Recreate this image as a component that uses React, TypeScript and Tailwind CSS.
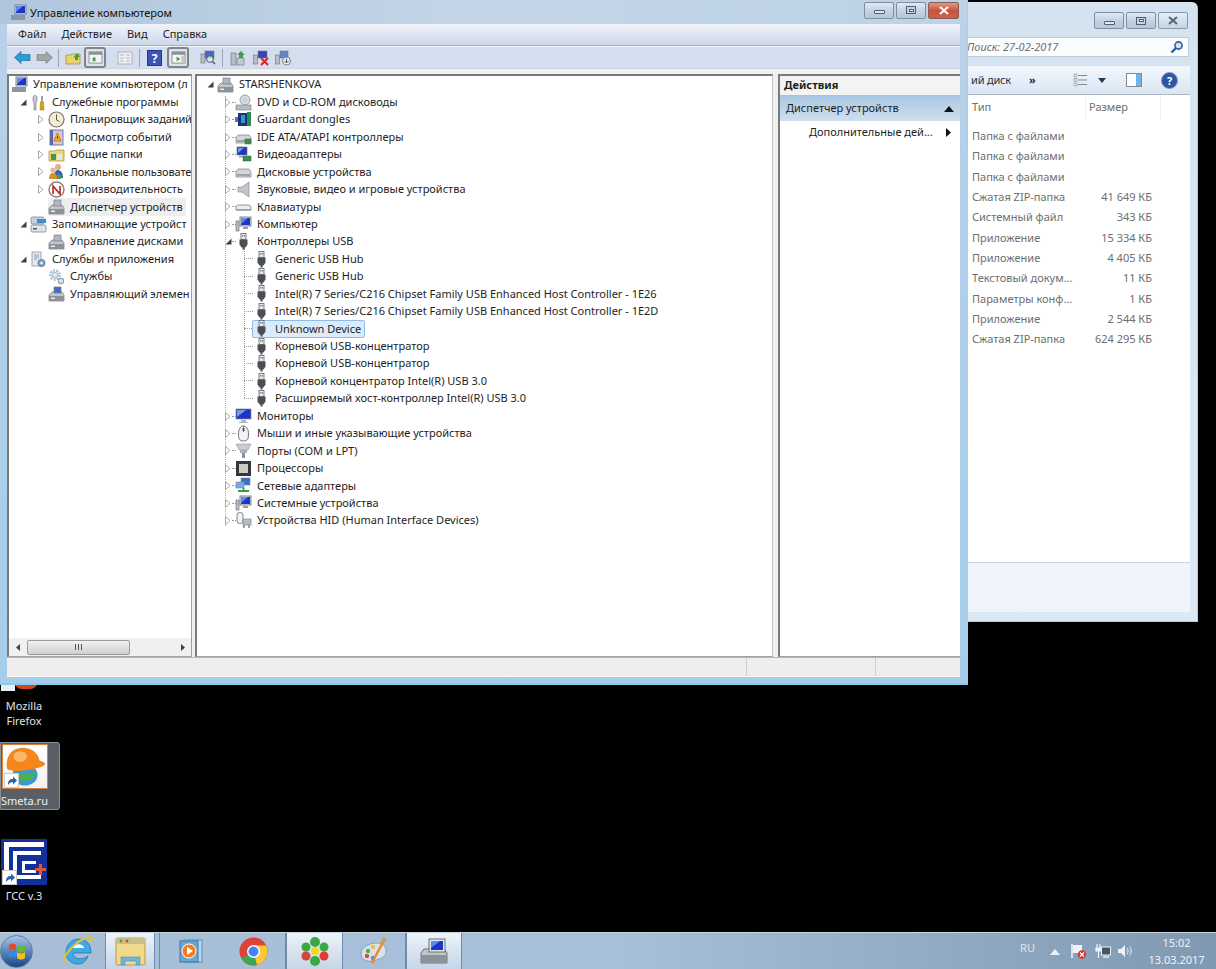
import React from "react";

const font = { fontFamily: '"Noto Sans", sans-serif' };

type IconName =
  | "computer" | "tools" | "clock" | "events" | "folder" | "users" | "perf" | "devmgr" | "storage" | "disk"
  | "services" | "gears" | "wmi" | "dvd" | "guardant" | "ide" | "video" | "hdd" | "sound" | "keyboard"
  | "pc" | "usb" | "monitor" | "mouse" | "port" | "cpu" | "net" | "sys" | "hid";

function Icon({ name }: { name: IconName }) {
  const c = "w-[17px] h-[17px] shrink-0";
  switch (name) {
    case "computer":
    case "pc":
    case "sys":
      return (
        <svg viewBox="0 0 17 17" className={c}>
          <rect x="5" y="1" width="11" height="9" fill="#dfe6ee" stroke="#667" strokeWidth="0.8" />
          <rect x="6" y="2" width="9" height="7" fill="#1c35c4" />
          <path d="M6 2h7L6 8z" fill="#5f8be8" />
          <path d="M8 11h5v2H8z" fill="#99a" />
          {name === "computer" && <rect x="1" y="11" width="14" height="5" fill="#8a96a3" />}
          {name !== "computer" && <rect x="1" y="5" width="3" height="10" fill="#b9c0c6" stroke="#667" strokeWidth="0.6" />}
        </svg>
      );
    case "tools":
      return (
        <svg viewBox="0 0 17 17" className={c}>
          <path d="M5 1l2 2v4l-1 1v8H4V8L3 7V3z" fill="#c5ccd4" stroke="#667" strokeWidth="0.6" />
          <path d="M11 2l2 0v6h-2z" fill="#9aa3ac" />
          <path d="M10.5 8h3l.5 8h-4z" fill="#e2a417" stroke="#8c6a10" strokeWidth="0.5" />
        </svg>
      );
    case "clock":
      return (
        <svg viewBox="0 0 17 17" className={c}>
          <circle cx="8.5" cy="8.5" r="7.5" fill="#f4ecd4" stroke="#7a7a70" strokeWidth="1.2" />
          <path d="M8.5 3.5v5.5l3 1.5" fill="none" stroke="#555" strokeWidth="1" />
        </svg>
      );
    case "events":
      return (
        <svg viewBox="0 0 17 17" className={c}>
          <rect x="2" y="1" width="13" height="15" fill="#d6c7d8" stroke="#5a5f80" strokeWidth="0.8" />
          <rect x="2" y="1" width="3" height="15" fill="#5a6aa8" />
          <path d="M9.5 4l3.5 8H6z" fill="#f0c020" stroke="#b8501c" strokeWidth="0.7" />
          <rect x="9" y="7" width="1" height="3" fill="#b02020" />
        </svg>
      );
    case "folder":
      return (
        <svg viewBox="0 0 17 17" className={c}>
          <path d="M1 5h6l1-1h8v11H1z" fill="#ecd679" stroke="#a98f38" strokeWidth="0.7" />
          <rect x="3" y="8" width="5" height="6" fill="#3d9a4a" />
          <rect x="9" y="8" width="5" height="6" fill="#dfe8ee" />
        </svg>
      );
    case "users":
      return (
        <svg viewBox="0 0 17 17" className={c}>
          <circle cx="10" cy="4" r="3" fill="#e0b080" />
          <path d="M6 15c0-6 2-8 4-8s5 2 5 8z" fill="#3460b8" />
          <circle cx="5" cy="7" r="2.6" fill="#e8b888" />
          <path d="M1 16c0-5 2-6 4-6s4 1 4 6z" fill="#d9902c" />
          <path d="M9 11l4 1v4H9z" fill="#4a9a50" />
        </svg>
      );
    case "perf":
      return (
        <svg viewBox="0 0 17 17" className={c}>
          <circle cx="8.5" cy="8.5" r="7.5" fill="#fff" stroke="#8b8078" strokeWidth="1.4" />
          <path d="M5 13V5l7 8V5" fill="none" stroke="#c22418" strokeWidth="1.6" />
        </svg>
      );
    case "devmgr":
    case "disk":
    case "wmi":
      return (
        <svg viewBox="0 0 17 17" className={c}>
          <path d="M1 10l3-3h10l2 3v6H1z" fill="#c2c6ca" stroke="#6d7278" strokeWidth="0.7" />
          <rect x="1" y="11" width="15" height="5" fill="#8d9298" />
          <rect x="6" y="2" width="7" height="6" fill={name === "wmi" ? "#4a6cc0" : "#aeb8c2"} stroke="#6d7278" strokeWidth="0.6" />
          <rect x="3" y="12.5" width="4" height="1.5" fill="#e8eaec" />
        </svg>
      );
    case "storage":
      return (
        <svg viewBox="0 0 17 17" className={c}>
          <rect x="1" y="1" width="13" height="7" rx="1.5" fill="#c6d2dc" stroke="#6c7884" strokeWidth="0.7" />
          <rect x="7" y="3" width="9" height="4" fill="#3b8dd0" />
          <rect x="1" y="9" width="15" height="7" rx="1.5" fill="#dfe4e8" stroke="#6c7884" strokeWidth="0.7" />
          <rect x="3" y="12" width="4" height="1.5" fill="#555" />
        </svg>
      );
    case "services":
      return (
        <svg viewBox="0 0 17 17" className={c}>
          <rect x="2" y="1" width="9" height="14" fill="#e4e9ee" stroke="#7c8894" strokeWidth="0.7" />
          <path d="M4 4h5M4 6h5M4 8h3" stroke="#7c8894" strokeWidth="0.8" />
          <circle cx="11.5" cy="12" r="3.6" fill="#7fa6cc" stroke="#4d7294" strokeWidth="0.8" />
          <circle cx="11.5" cy="12" r="1.2" fill="#fff" />
        </svg>
      );
    case "gears":
      return (
        <svg viewBox="0 0 17 17" className={c}>
          <circle cx="7" cy="7" r="4.6" fill="none" stroke="#a9bccd" strokeWidth="2.4" strokeDasharray="2 1.2" />
          <circle cx="7" cy="7" r="2.6" fill="#e7eef4" stroke="#8ca4b8" strokeWidth="0.8" />
          <circle cx="13" cy="13" r="2.6" fill="#dfe8ef" stroke="#8ca4b8" strokeWidth="1.2" />
        </svg>
      );
    case "dvd":
      return (
        <svg viewBox="0 0 17 17" className={c}>
          <circle cx="10" cy="6" r="5" fill="#d5dce2" stroke="#7a8894" strokeWidth="0.7" />
          <circle cx="10" cy="6" r="1.3" fill="#fff" stroke="#7a8894" strokeWidth="0.5" />
          <rect x="1" y="11" width="15" height="5" fill="#b8bcc0" stroke="#787c80" strokeWidth="0.6" />
        </svg>
      );
    case "guardant":
      return (
        <svg viewBox="0 0 17 17" className={c}>
          <rect x="0" y="6" width="4" height="5" fill="#6a7480" />
          <rect x="3" y="2" width="9" height="13" fill="#1c2f8e" />
          <rect x="6" y="4" width="4" height="8" fill="#28a0b0" />
          <rect x="12" y="1" width="4" height="14" fill="#2c8c50" />
        </svg>
      );
    case "ide":
    case "hdd":
      return (
        <svg viewBox="0 0 17 17" className={c}>
          <path d="M1 9l2-3h11l2 3v5H1z" fill="#d2d6da" stroke="#7c8084" strokeWidth="0.7" />
          <rect x="2" y="11" width="13" height="2" fill="#a0a4a8" />
          {name === "ide" && <rect x="10" y="10" width="6" height="5" fill="#3f8f52" stroke="#2a6a3a" strokeWidth="0.5" />}
        </svg>
      );
    case "video":
      return (
        <svg viewBox="0 0 17 17" className={c}>
          <rect x="2" y="1" width="10" height="8" fill="#1c35c4" stroke="#778" strokeWidth="0.7" />
          <path d="M3 2h6L3 7z" fill="#6f9ae8" />
          <rect x="8" y="10" width="8" height="5" fill="#3d8f4e" stroke="#2a6a3a" strokeWidth="0.5" />
          <rect x="4" y="10" width="4" height="1.5" fill="#99a" />
        </svg>
      );
    case "sound":
      return (
        <svg viewBox="0 0 17 17" className={c}>
          <path d="M14 1v15L7 11H3V6h4z" fill="#c2c6ca" stroke="#8a8e92" strokeWidth="0.7" />
        </svg>
      );
    case "keyboard":
      return (
        <svg viewBox="0 0 17 17" className={c}>
          <path d="M1 10c0-2 1-3 3-3h9c2 0 3 1 3 3v2H1z" fill="#eceef0" stroke="#777b80" strokeWidth="0.8" />
          <rect x="1" y="11" width="15" height="1.5" fill="#9a9ea2" />
        </svg>
      );
    case "usb":
      return (
        <svg viewBox="0 0 17 17" className={c}>
          <rect x="6" y="0.5" width="5" height="6" fill="#e8eaec" stroke="#60666c" strokeWidth="0.8" />
          <rect x="7.3" y="2" width="0.9" height="1.6" fill="#60666c" />
          <rect x="8.9" y="2" width="0.9" height="1.6" fill="#60666c" />
          <path d="M4.5 6.5h8v5l-2 3h-4l-2-3z" fill="#4a4f55" />
          <rect x="7.5" y="14" width="2" height="2.5" fill="#4a4f55" />
        </svg>
      );
    case "monitor":
      return (
        <svg viewBox="0 0 17 17" className={c}>
          <rect x="1" y="1" width="15" height="10" fill="#1c35c4" stroke="#889" strokeWidth="0.7" />
          <path d="M2 2h9L2 9z" fill="#6f9ae8" />
          <path d="M6 12h5v2h2v1H4v-1h2z" fill="#b0b6bc" />
        </svg>
      );
    case "mouse":
      return (
        <svg viewBox="0 0 17 17" className={c}>
          <path d="M8.5 1c3 0 5 3 5 8s-1 7-5 7-5-2-5-7 2-8 5-8z" fill="#f2f3f4" stroke="#5f6368" strokeWidth="0.9" />
          <path d="M8.5 1v6" stroke="#5f6368" strokeWidth="0.8" />
          <rect x="7.6" y="3" width="1.8" height="3" fill="#444" />
        </svg>
      );
    case "port":
      return (
        <svg viewBox="0 0 17 17" className={c}>
          <path d="M1 2h15l-3 6H4z" fill="#c6ccd2" stroke="#9098a0" strokeWidth="0.6" />
          <rect x="5" y="8" width="7" height="3" fill="#a8b0b8" />
          <rect x="7" y="11" width="3" height="5" fill="#8a929a" />
        </svg>
      );
    case "cpu":
      return (
        <svg viewBox="0 0 17 17" className={c}>
          <rect x="1" y="1" width="15" height="15" fill="#34383c" />
          <rect x="4" y="4" width="9" height="9" fill="#c8ccc4" />
        </svg>
      );
    case "net":
      return (
        <svg viewBox="0 0 17 17" className={c}>
          <rect x="6" y="1" width="9" height="7" fill="#3d6ecc" stroke="#789" strokeWidth="0.6" />
          <rect x="1" y="5" width="8" height="6" fill="#79a8e8" stroke="#789" strokeWidth="0.6" />
          <path d="M3 14h11M8.5 11v3" stroke="#30a048" strokeWidth="1.8" />
        </svg>
      );
    case "hid":
      return (
        <svg viewBox="0 0 17 17" className={c}>
          <rect x="2" y="0.5" width="6" height="11" rx="2.5" fill="#eef0f2" stroke="#666c72" strokeWidth="0.8" />
          <rect x="8" y="7" width="8" height="6" fill="#b6bcc2" stroke="#767c82" strokeWidth="0.6" />
          <path d="M9 13v3M14 13v3" stroke="#767c82" strokeWidth="1.4" />
        </svg>
      );
  }
}

function Caret({ kind }: { kind: "open" | "closed" | "none" }) {
  return (
    <span className="w-[8px] h-[17px] flex items-center justify-center shrink-0">
      {kind === "closed" && (
        <svg width="6" height="9" viewBox="0 0 6 9">
          <path d="M0.5 0.5L5 4.5L0.5 8.5z" fill="#fff" stroke="#a6a6a6" />
        </svg>
      )}
      {kind === "open" && (
        <svg width="7" height="7" viewBox="0 0 7 7">
          <path d="M6.5 0.5V6.5H0.5z" fill="#404040" />
        </svg>
      )}
    </span>
  );
}

type Row = { t: string; i: IconName; c: "open" | "closed" | "none"; lvl: number; sel?: "gray" | "blue"; tight?: boolean };

const leftRows: Row[] = [
  { t: "Управление компьютером (л", i: "computer", c: "none", lvl: 0 },
  { t: "Служебные программы", i: "tools", c: "open", lvl: 1 },
  { t: "Планировщик заданий", i: "clock", c: "closed", lvl: 2, tight: true },
  { t: "Просмотр событий", i: "events", c: "closed", lvl: 2 },
  { t: "Общие папки", i: "folder", c: "closed", lvl: 2 },
  { t: "Локальные пользовате", i: "users", c: "closed", lvl: 2, tight: true },
  { t: "Производительность", i: "perf", c: "closed", lvl: 2 },
  { t: "Диспетчер устройств", i: "devmgr", c: "none", lvl: 2, sel: "gray" },
  { t: "Запоминающие устройст", i: "storage", c: "open", lvl: 1 },
  { t: "Управление дисками", i: "disk", c: "none", lvl: 2 },
  { t: "Службы и приложения", i: "services", c: "open", lvl: 1 },
  { t: "Службы", i: "gears", c: "none", lvl: 2 },
  { t: "Управляющий элемен", i: "wmi", c: "none", lvl: 2 },
];

const centerRows: Row[] = [
  { t: "STARSHENKOVA", i: "devmgr", c: "open", lvl: 0 },
  { t: "DVD и CD-ROM дисководы", i: "dvd", c: "closed", lvl: 1 },
  { t: "Guardant dongles", i: "guardant", c: "closed", lvl: 1 },
  { t: "IDE ATA/ATAPI контроллеры", i: "ide", c: "closed", lvl: 1 },
  { t: "Видеоадаптеры", i: "video", c: "closed", lvl: 1 },
  { t: "Дисковые устройства", i: "hdd", c: "closed", lvl: 1 },
  { t: "Звуковые, видео и игровые устройства", i: "sound", c: "closed", lvl: 1 },
  { t: "Клавиатуры", i: "keyboard", c: "closed", lvl: 1 },
  { t: "Компьютер", i: "pc", c: "closed", lvl: 1 },
  { t: "Контроллеры USB", i: "usb", c: "open", lvl: 1 },
  { t: "Generic USB Hub", i: "usb", c: "none", lvl: 2 },
  { t: "Generic USB Hub", i: "usb", c: "none", lvl: 2 },
  { t: "Intel(R) 7 Series/C216 Chipset Family USB Enhanced Host Controller - 1E26", i: "usb", c: "none", lvl: 2 },
  { t: "Intel(R) 7 Series/C216 Chipset Family USB Enhanced Host Controller - 1E2D", i: "usb", c: "none", lvl: 2 },
  { t: "Unknown Device", i: "usb", c: "none", lvl: 2, sel: "blue" },
  { t: "Корневой USB-концентратор", i: "usb", c: "none", lvl: 2 },
  { t: "Корневой USB-концентратор", i: "usb", c: "none", lvl: 2 },
  { t: "Корневой концентратор Intel(R) USB 3.0", i: "usb", c: "none", lvl: 2 },
  { t: "Расширяемый хост-контроллер Intel(R) USB 3.0", i: "usb", c: "none", lvl: 2 },
  { t: "Мониторы", i: "monitor", c: "closed", lvl: 1 },
  { t: "Мыши и иные указывающие устройства", i: "mouse", c: "closed", lvl: 1 },
  { t: "Порты (COM и LPT)", i: "port", c: "closed", lvl: 1 },
  { t: "Процессоры", i: "cpu", c: "closed", lvl: 1 },
  { t: "Сетевые адаптеры", i: "net", c: "closed", lvl: 1 },
  { t: "Системные устройства", i: "sys", c: "closed", lvl: 1 },
  { t: "Устройства HID (Human Interface Devices)", i: "hid", c: "closed", lvl: 1 },
];

function TreeRow({ r, left }: { r: Row; left: boolean }) {
  const rootLeft = left && r.lvl === 0;
  const pad = left ? [2, 10, 28][r.lvl] : [9, 27, 45][r.lvl];
  return (
    <div className="relative flex items-center h-[17.44px]" style={{ paddingLeft: pad }}>
      {!rootLeft && <Caret kind={r.c} />}
      {!rootLeft &&
        (!left && r.lvl === 1 ? (
          <span className="w-[4px] -mr-[1px] shrink-0 border-t border-dotted border-[#999]" />
        ) : (
          <span className="w-[3px] shrink-0" />
        ))}
      {!left && r.lvl === 2 && (
        <span className={`absolute left-[47px] top-[8px] border-t border-dotted border-[#999] ${r.sel ? "w-[8px]" : "w-[9px]"}`} />
      )}
      <span
        className={
          r.sel === "gray"
            ? "flex items-center gap-[3px] h-[18px] bg-[#eeeeee] rounded-[2px] pr-[3px]"
            : r.sel === "blue"
            ? "flex items-center gap-[3px] h-[18px] bg-[#dcebfc] border border-[#8fbbe6] rounded-[2px] pr-[3px] -ml-[1px]"
            : "flex items-center gap-[3px]"
        }
      >
        <Icon name={r.i} />
        <span className={`whitespace-nowrap pl-[2px] ${r.tight ? "tracking-[-0.1px]" : ""}`}>{r.t}</span>
      </span>
    </div>
  );
}

function CaptionBtn({ kind, active }: { kind: "min" | "max" | "close"; active: boolean }) {
  const base =
    kind === "close"
      ? active
        ? "w-[31px] bg-gradient-to-b from-[#e09a8a] via-[#c9523c] to-[#c8634f] border-[#8a5a55]"
        : "w-[30px] bg-gradient-to-b from-[#e4edf6] to-[#c5d4e3] border-[#8a99a8]"
      : "w-[30px] bg-gradient-to-b from-[#dfe9f3] via-[#c3d3e3] to-[#b4c8da] border-[#7d8fa1]";
  return (
    <div className={`h-[17px] border rounded-[2px] flex items-center justify-center ${base}`}>
      {kind === "min" && <div className="w-[11px] h-[4px] mt-[4px] bg-[#dfe6ee] border border-[#4f5d6c] rounded-[1px]" />}
      {kind === "max" && (
        <div className="w-[10px] h-[8px] border border-[#4f5d6c] bg-[#c6d5e3] flex items-center justify-center">
          <div className="w-[5px] h-[3px] border border-[#4f5d6c] bg-[#eef3f8]" />
        </div>
      )}
      {kind === "close" && (
        <svg width="12" height="9" viewBox="0 0 12 9">
          <path d="M2 1l8 7M10 1L2 8" stroke={active ? "#fff" : "#59697a"} strokeWidth="2.2" />
        </svg>
      )}
    </div>
  );
}

function ToolIcon({ children, pressed }: { children: React.ReactNode; pressed?: boolean }) {
  return (
    <div
      className={`w-[22px] h-[21px] flex items-center justify-center rounded-[3px] shrink-0 ${
        pressed ? "border-2 border-[#80858c] bg-[#dfe3e8]" : ""
      }`}
    >
      {children}
    </div>
  );
}

const Sep = () => <div className="w-px h-[18px] bg-[#9aa4b2] mx-[3px] shrink-0" />;

function Toolbar() {
  return (
    <div className="flex items-center h-full w-full pl-[4px] border-t border-[#f2f5fa]">
      <ToolIcon>
        <svg width="17" height="13" viewBox="0 0 17 13"><path d="M0.5 6.5L7 0.5V3.5H16V9.5H7V12.5z" fill="#2f9ad8" stroke="#1a6ea8" strokeWidth="0.7" /></svg>
      </ToolIcon>
      <ToolIcon>
        <svg width="17" height="13" viewBox="0 0 17 13"><path d="M16.5 6.5L10 0.5V3.5H1V9.5H10V12.5z" fill="#a2a5a8" stroke="#7e8184" strokeWidth="0.7" /></svg>
      </ToolIcon>
      <Sep />
      <ToolIcon>
        <svg width="16" height="14" viewBox="0 0 16 14"><path d="M1 13V4h5l1-1h8v10z" fill="#e8d36c" stroke="#a08a2c" strokeWidth="0.7" /><path d="M8 7l4-5 3 4h-2v3h-3V6z" fill="#4a9a3c" /></svg>
      </ToolIcon>
      <ToolIcon pressed>
        <svg width="15" height="13" viewBox="0 0 16 14"><rect x="1" y="1" width="14" height="12" fill="#f4f6f6" stroke="#8a8e92" /><rect x="1" y="1" width="14" height="3" fill="#8a9096" /><rect x="5" y="7" width="3" height="4" fill="#3f9a4c" /></svg>
      </ToolIcon>
      <span className="w-[8px] shrink-0" />
      <ToolIcon>
        <svg width="16" height="14" viewBox="0 0 16 14"><rect x="1" y="1" width="14" height="12" fill="#eef0f2" stroke="#b0b4b8" /><path d="M3 4h4M3 7h4M3 10h4M9 4h4M9 7h4M9 10h4" stroke="#b8bcc0" /></svg>
      </ToolIcon>
      <Sep />
      <ToolIcon>
        <svg width="15" height="16" viewBox="0 0 15 16"><rect x="0.5" y="0.5" width="14" height="15" fill="#3a54b8" stroke="#26348a" /><text x="7.5" y="12.5" textAnchor="middle" fontSize="12" fontWeight="700" fill="#fff" style={font}>?</text></svg>
      </ToolIcon>
      <span className="w-[2px] shrink-0" />
      <ToolIcon pressed>
        <svg width="15" height="13" viewBox="0 0 16 14"><rect x="1" y="1" width="14" height="12" fill="#f4f6f6" stroke="#8a8e92" /><rect x="1" y="1" width="14" height="3" fill="#8a9096" /><path d="M6 6l4 2.5L6 11z" fill="#3f9a4c" /><rect x="11" y="5" width="3" height="7" fill="#c4c8cc" /></svg>
      </ToolIcon>
      <span className="w-[8px] shrink-0" />
      <ToolIcon>
        <svg width="16" height="15" viewBox="0 0 16 15"><rect x="1" y="4" width="4" height="9" fill="#b8bec4" stroke="#6a7076" strokeWidth="0.6" /><rect x="5" y="1" width="9" height="7" fill="#3f6ac0" stroke="#778" strokeWidth="0.6" /><circle cx="10" cy="9" r="3.4" fill="#d8ecf4" fillOpacity="0.7" stroke="#4a5a6a" /><path d="M12.5 11.5L15 14" stroke="#4a5a6a" strokeWidth="1.5" /></svg>
      </ToolIcon>
      <Sep />
      <span className="w-[1px] shrink-0" />
      <ToolIcon>
        <svg width="17" height="16" viewBox="0 0 17 16"><rect x="1" y="3" width="5" height="12" fill="#b8bec4" stroke="#6a7076" strokeWidth="0.6" /><path d="M7 15V8h7v7z" fill="#c4cad0" stroke="#6a7076" strokeWidth="0.6" /><path d="M11 1l4 4h-2v3h-4V5H7z" fill="#3fa048" /></svg>
      </ToolIcon>
      <span className="w-[1px] shrink-0" />
      <ToolIcon>
        <svg width="17" height="16" viewBox="0 0 17 16"><rect x="0.5" y="5" width="4" height="9" fill="#b8bec4" stroke="#6a7076" strokeWidth="0.6" /><rect x="5" y="1" width="9" height="7" fill="#3246b8" stroke="#778" strokeWidth="0.6" /><path d="M8 8l7 7M15 8l-7 7" stroke="#d8261c" strokeWidth="2" /></svg>
      </ToolIcon>
      <ToolIcon>
        <svg width="17" height="16" viewBox="0 0 17 16"><rect x="0.5" y="5" width="4" height="9" fill="#b8bec4" stroke="#6a7076" strokeWidth="0.6" /><rect x="5" y="1" width="8" height="7" fill="#5f86c8" stroke="#778" strokeWidth="0.6" /><circle cx="11.5" cy="11" r="4" fill="#eef0f2" stroke="#7a8086" /><path d="M11.5 8.5v4M9.5 11l2 2 2-2" stroke="#50565c" fill="none" /></svg>
      </ToolIcon>
    </div>
  );
}

function Scrollbar() {
  return (
    <div className="h-[18px] bg-[#f0f0f0] flex items-center shrink-0 text-[#333]">
      <div className="w-[18px] flex justify-center">
        <svg width="4" height="7" viewBox="0 0 4 7"><path d="M4 0v7L0 3.5z" fill="#404040" /></svg>
      </div>
      <div className="w-[103px] h-[15px] rounded-[2px] border border-[#9a9a9a] bg-gradient-to-b from-[#f2f2f2] to-[#cfcfcf] flex items-center justify-center gap-[1px]">
        <div className="w-px h-[6px] bg-[#555]" />
        <div className="w-px h-[6px] bg-[#555] ml-px" />
        <div className="w-px h-[6px] bg-[#555] ml-px" />
      </div>
      <div className="flex-1" />
      <div className="w-[17px] flex justify-center">
        <svg width="4" height="7" viewBox="0 0 4 7"><path d="M0 0v7L4 3.5z" fill="#404040" /></svg>
      </div>
    </div>
  );
}

function MainWindow() {
  return (
    <div className="absolute left-0 top-0 w-[968px] h-[685px] flex flex-col bg-gradient-to-b from-[#b9d1e8] to-[#a5cdea] border-b-2 border-[#7fd0f0] border-r border-r-[#9fd4ee] text-[#1e1e1e] text-[11px]">
      <div className="h-[24px] flex items-center shrink-0 bg-gradient-to-r from-[#b0c6dc] via-[#c4d6e8] to-[#bdd2e6] pl-[10px] pr-[8px]">
        <Icon name="computer" />
        <span className="ml-[3px] mt-[2px] text-[#111]">Управление компьютером</span>
        <div className="flex-1" />
        <div className="flex gap-[2px] -mt-[4px]">
          <CaptionBtn kind="min" active />
          <CaptionBtn kind="max" active />
          <CaptionBtn kind="close" active />
        </div>
      </div>
      <div className="mx-[7px] shrink-0 bg-gradient-to-b from-[#f0f4fa] to-[#cdd8ea] h-[22px] border-b border-[#a9b2c0]">
        <div className="flex items-center h-full pl-[11px] gap-[15px]">
          <span>Файл</span>
          <span>Действие</span>
          <span>Вид</span>
          <span>Справка</span>
        </div>
      </div>
      <div className="bg-[#d5deee] mx-[7px] shrink-0 h-[23px] flex items-center border-b border-[#cfd6e2]">
        <Toolbar />
      </div>
      <div className="flex-1 min-h-0 bg-[#f0f0f0] mx-[7px] pt-[5px] flex gap-[3px]">
        <div className="w-[185px] flex flex-col border-t-2 border-l-2 border-[#7a7a7a] border-b border-b-[#a0a0a0] border-r border-r-[#a0a0a0] bg-white shrink-0">
          <div className="flex-1 overflow-hidden min-h-0">
            {leftRows.map((r) => (
              <TreeRow key={r.t} r={r} left />
            ))}
          </div>
          <Scrollbar />
        </div>
        <div className="flex-1 relative border-t-2 border-l-2 border-[#7a7a7a] border-b border-b-[#a0a0a0] border-r border-r-[#c4c4c4] bg-white overflow-hidden">
          <div className="absolute left-[28px] top-[20px] h-[430px] border-l border-dotted border-[#aaa]" />
          <div className="absolute left-[47px] top-[172px] h-[150px] border-l border-dotted border-[#999]" />
          {centerRows.map((r, i) => (
            <TreeRow key={r.t + i} r={r} left={false} />
          ))}
        </div>
        <div className="w-[182px] ml-[2px] shrink-0 flex flex-col border-t-2 border-l-2 border-[#7a7a7a] border-b border-b-[#a0a0a0] bg-white">
          <div className="h-[20px] flex items-center pl-[4px] font-bold bg-[#f3f3f3] border-b border-[#b4c0cc] shrink-0">Действия</div>
          <div className="h-[25px] flex items-center justify-between pl-[6px] pr-[6px] bg-gradient-to-b from-[#aac7e3] to-[#d0dfee] shrink-0">
            <span>Диспетчер устройств</span>
            <svg width="10" height="6" viewBox="0 0 10 6"><path d="M0 6L5 0L10 6z" fill="#111" /></svg>
          </div>
          <div className="h-[22px] flex items-center justify-between pl-[29px] pr-[9px] shrink-0">
            <span>Дополнительные дей...</span>
            <svg width="5" height="9" viewBox="0 0 5 9"><path d="M0 0L5 4.5L0 9z" fill="#111" /></svg>
          </div>
        </div>
      </div>
      <div className="h-[20px] mx-[7px] shrink-0 bg-[#f0eeed] border-t border-[#b8b8b8] flex justify-end border-b border-b-white">
        <div className="w-[129px] border-l border-[#d2d0ce]" />
        <div className="w-[85px] border-l border-[#d2d0ce]" />
      </div>
      <div className="h-[6px] shrink-0" />
    </div>
  );
}

const fileRows: [string, string][] = [
  ["Папка с файлами", ""],
  ["Папка с файлами", ""],
  ["Папка с файлами", ""],
  ["Сжатая ZIP-папка", "41 649 КБ"],
  ["Системный файл", "343 КБ"],
  ["Приложение", "15 334 КБ"],
  ["Приложение", "4 405 КБ"],
  ["Текстовый докум...", "11 КБ"],
  ["Параметры конф...", "1 КБ"],
  ["Приложение", "2 544 КБ"],
  ["Сжатая ZIP-папка", "624 295 КБ"],
];

function BackWindow() {
  return (
    <div className="absolute left-[968px] top-[2px] w-[230px] h-[620px] rounded-tr-[6px] bg-gradient-to-b from-[#d5e3f1] to-[#dbe8f5] border-r border-b border-[#bcc8d4] flex flex-col text-[11px] text-[#6e6e6e] overflow-hidden">
      <div className="h-[10px] shrink-0" />
      <div className="flex justify-end gap-[2px] pr-[9px] h-[17px] shrink-0">
        <CaptionBtn kind="min" active={false} />
        <CaptionBtn kind="max" active={false} />
        <CaptionBtn kind="close" active={false} />
      </div>
      <div className="h-[8px] shrink-0" />
      <div className="h-[20px] shrink-0 bg-white/90 border border-[#bccbda] border-l-0 mr-[8px] flex items-center justify-between pr-[4px] italic text-[#6f6f6f]">
        <span className="-ml-[1px]">Поиск: 27-02-2017</span>
        <svg width="14" height="14" viewBox="0 0 14 14"><circle cx="8.5" cy="5.5" r="3.6" fill="#cfe4f6" stroke="#2b5f9c" strokeWidth="1.6" /><path d="M6 8L1.5 12.5" stroke="#2b5f9c" strokeWidth="2.4" /></svg>
      </div>
      <div className="h-[9px] shrink-0" />
      <div className="mr-[7px] flex-1 min-h-0 flex flex-col bg-white">
        <div className="h-[29px] shrink-0 flex items-center bg-gradient-to-b from-[#f3f7fc] to-[#dbe6f3] border-b border-[#a9b6c4] text-[#1e395b]">
          <span className="ml-[3px] text-[#1e2e42] whitespace-nowrap w-[36px] tracking-[-0.2px]">ий диск</span>
          <span className="ml-[22px] text-[#1e2e42] font-bold w-[6px]">»</span>
          <svg width="15" height="14" viewBox="0 0 15 14" className="ml-[38px]"><rect x="1" y="1" width="3" height="3" fill="#d8dde2" stroke="#99a" strokeWidth="0.6" /><rect x="1" y="5.5" width="3" height="3" fill="#d8dde2" stroke="#99a" strokeWidth="0.6" /><rect x="1" y="10" width="3" height="3" fill="#d8dde2" stroke="#99a" strokeWidth="0.6" /><path d="M5 2.5h9M5 7h9M5 11.5h9" stroke="#7f8a96" /></svg>
          <svg width="8" height="5" viewBox="0 0 8 5" className="ml-[10px]"><path d="M0 0h8L4 5z" fill="#1e395b" /></svg>
          <svg width="16" height="14" viewBox="0 0 16 14" className="ml-[20px]"><rect x="0.5" y="0.5" width="15" height="13" fill="#fdfeff" stroke="#7f8a96" /><rect x="10" y="1" width="5" height="12" fill="#6fb4e4" /></svg>
          <svg width="17" height="17" viewBox="0 0 17 17" className="ml-[19px]"><circle cx="8.5" cy="8.5" r="8" fill="#2d56a8" stroke="#8396b8" /><text x="8.5" y="12.7" textAnchor="middle" fontSize="11" fontWeight="700" fill="#fff" style={font}>?</text></svg>
        </div>
        <div className="h-[25px] shrink-0 flex items-center">
          <span className="w-[117px] pl-[4px]">Тип</span>
          <span className="pl-[3px] border-l border-[#eef1f4] h-full flex items-center w-[75px]">Размер</span>
          <span className="border-l border-[#eef1f4] h-full" />
        </div>
        <div className="pt-[6px] flex-1 min-h-0">
          {fileRows.map(([a, b], i) => (
            <div key={i} className="h-[20.35px] flex items-center">
              <span className="w-[107px] pl-[4px] whitespace-nowrap shrink-0">{a}</span>
              <span className="w-[77px] text-right whitespace-nowrap">{b}</span>
            </div>
          ))}
        </div>
        <div className="h-[50px] shrink-0 bg-[#f0f4fb] border-t border-[#cfd6de]" />
      </div>
      <div className="h-[9px] shrink-0" />
    </div>
  );
}

function Shortcut() {
  return (
    <svg viewBox="0 0 15 15" className="absolute left-[1px] bottom-0 w-[15px] h-[15px]">
      <rect x="0.5" y="0.5" width="14" height="14" fill="#fff" stroke="#ccc" />
      <path d="M4 12c0-5 2-6 5-6V3.5l4 4-4 4V9c-2 0-3 .8-5 3z" fill="#2a62b0" />
    </svg>
  );
}

function Desktop() {
  return (
    <>
      <div className="absolute left-0 top-[685px] w-[48px] h-[44px] flex flex-col items-center text-[11px] leading-[14.5px] text-[#e4e4e4] overflow-hidden">
        <div className="absolute left-[14px] -top-[4px] w-[24px] h-[8px] bg-[#d9431c] rounded-b-full" />
        <div className="absolute left-[1px] top-0 w-[14px] h-[6px] bg-[#e8eef4]" />
        <div className="pt-[14px] text-center">Mozilla<br />Firefox</div>
      </div>
      <div className="absolute left-0 top-[742px] w-[60px] h-[68px] bg-[#5a5f66] border border-[#8b9096] rounded-r-[3px] flex flex-col text-[11px] text-[#eee]">
        <div className="relative w-[46px] h-[46px] mt-[1px] ml-px bg-gradient-to-b from-white to-[#f2f2f2] border border-[#d08040] overflow-hidden">
          <svg viewBox="0 0 44 44" className="w-full h-full">
            <ellipse cx="22" cy="31" rx="13" ry="11" fill="#3b9ad0" />
            <path d="M11 27c4 5 18 5 22-1l-2 8c-5 4-14 4-18 0z" fill="#4fb048" />
            <path d="M3 21C3 7 13 2 22 3c9 1 14 7 15 13 3 1 6 2 6 4-6 6-33 9-39 5-1-1-1-3-1-4z" fill="#f5861c" />
            <ellipse cx="17" cy="12" rx="7" ry="5.5" fill="#fbb86a" />
          </svg>
          <Shortcut />
        </div>
        <span className="mt-[4px] whitespace-nowrap">Smeta.ru</span>
      </div>
      <div className="absolute left-0 top-[839px] w-[48px] flex flex-col items-center text-[11px] text-[#e4e4e4]">
        <div className="relative w-[46px] h-[46px] self-start ml-[1px]">
          <svg viewBox="0 0 46 46" className="w-full h-full">
            <rect width="46" height="46" fill="#12309a" />
            <path d="M3 3h40v5H8v30h-5z" fill="#fff" />
            <path d="M12 12h28v4H16v20h24v4H12z" fill="#fff" />
            <path d="M21 22h14v3H24v6h11v3H21z" fill="#fff" />
            <path d="M38 25h3v4h4v3h-4v4h-3v-4h-4v-3h4z" fill="#e8542c" />
          </svg>
          <Shortcut />
        </div>
        <span className="mt-[3px]">ГСС v.3</span>
      </div>
    </>
  );
}

function TaskBtn({ w, active, children }: { w: number; active?: boolean; children: React.ReactNode }) {
  return (
    <div
      style={{ width: w }}
      className={`h-full flex items-center justify-center shrink-0 border-r border-[#6e8bad] ${
        active ? "bg-gradient-to-b from-[#eef3f9] to-[#c5d6e8] border-l border-l-[#6e8bad]" : ""
      }`}
    >
      {children}
    </div>
  );
}

function Taskbar() {
  return (
    <div className="absolute left-0 right-0 bottom-0 h-[37px] bg-gradient-to-r from-[#a7bed6] via-[#a8c0da] to-[#8099b2] border-t border-[#c8d4e0] flex items-center text-[11px]">
      <div className="w-[51px] flex items-center shrink-0">
        <div className="w-[33px] h-[33px] rounded-full bg-gradient-to-b from-[#a6c4e4] to-[#16488c] border border-[#5c7ca0] flex items-center justify-center">
          <svg width="20" height="20" viewBox="0 0 20 20"><path d="M2 4c3-2 5-2 7 0v6c-2-2-4-2-7 0z" fill="#e8482c" /><path d="M10 4c3 2 5 2 8 0v6c-3 2-5 2-8 0z" fill="#68b82c" /><path d="M2 11c3-2 5-2 7 0v6c-2-2-4-2-7 0z" fill="#2f8ce0" /><path d="M10 11c3 2 5 2 8 0v6c-3 2-5 2-8 0z" fill="#f4c020" /></svg>
        </div>
      </div>
      <div className="w-[54px] flex justify-center shrink-0">
        <svg width="32" height="32" viewBox="0 0 32 32">
          <path d="M4 18C4 9 10 4 17 4c8 0 12 6 12 14H11c0 6 9 8 15 3-2 6-6 8-10 8-7 0-12-5-12-11z" fill="#3fa9e6" stroke="#1f74b4" strokeWidth="0.8" />
          <path d="M11 13h11c-1-5-10-5-11 0z" fill="#fff" />
          <path d="M2 28C0 22 14 4 28 2c3 0 2 3 0 5" fill="none" stroke="#e2c23a" strokeWidth="2" />
        </svg>
      </div>
      <TaskBtn w={50} active>
        <svg width="31" height="29" viewBox="0 0 31 29">
          <rect x="1" y="1" width="29" height="27" rx="1" fill="#f0d98a" stroke="#b99b4a" />
          <rect x="1" y="1" width="29" height="6" fill="#c9c088" />
          <circle cx="6" cy="4" r="1.4" fill="#5aa040" />
          <circle cx="12" cy="4" r="1.4" fill="#d04a30" />
          <path d="M6 28V20h19v8h-4v-4H10v4z" fill="#6fb4dc" stroke="#4a86b4" strokeWidth="0.5" />
        </svg>
      </TaskBtn>
      <div className="w-[5px] h-full border-r border-[#6e8bad] shrink-0" />
      <div className="w-[62px] h-full flex items-center justify-center shrink-0">
        <svg width="26" height="26" viewBox="0 0 26 26">
          <rect x="6" y="2" width="18" height="22" fill="#b8d6ee" stroke="#5d8db4" />
          <rect x="2" y="3" width="18" height="21" fill="#6ca7d4" stroke="#3e74a4" />
          <circle cx="11" cy="13" r="7" fill="#f47c20" stroke="#fff" strokeWidth="1" />
          <path d="M9 9l6 4-6 4z" fill="#fff" />
        </svg>
      </div>
      <TaskBtn w={64}>
        <svg width="29" height="29" viewBox="0 0 29 29">
          <circle cx="14.5" cy="14.5" r="14" fill="#db4437" />
          <path d="M14.5 14.5L2.4 21.5A14 14 0 0 0 18 28z" fill="#3aa757" />
          <path d="M14.5 14.5L18 28A14 14 0 0 0 27 8.5H14.5z" fill="#fcc934" />
          <circle cx="14.5" cy="14.5" r="6.5" fill="#fff" />
          <circle cx="14.5" cy="14.5" r="5" fill="#4285f4" />
        </svg>
      </TaskBtn>
      <TaskBtn w={57} active>
        <svg width="28" height="30" viewBox="0 0 28 30">
          <circle cx="14" cy="6" r="5" fill="#3aa845" /><circle cx="5" cy="11" r="4.5" fill="#3aa845" />
          <circle cx="23" cy="11" r="4.5" fill="#3aa845" /><circle cx="5" cy="20" r="4.5" fill="#d6433a" />
          <circle cx="23" cy="20" r="4.5" fill="#e23a2c" /><circle cx="14" cy="25" r="5" fill="#3aa845" />
          <circle cx="14" cy="15" r="4" fill="#f2d81c" />
        </svg>
      </TaskBtn>
      <TaskBtn w={63}>
        <svg width="30" height="30" viewBox="0 0 30 30">
          <path d="M2 18C2 11 10 7 18 7c6 0 10 4 9 10-1 5-9 7-14 8-6 1-11-2-11-7z" fill="#d8e2ec" stroke="#8ea0b2" />
          <circle cx="9" cy="15" r="2.2" fill="#5ca84a" /><circle cx="14" cy="11" r="2.2" fill="#f4c03a" />
          <circle cx="8" cy="20" r="2.2" fill="#d84a3a" /><circle cx="14" cy="22" r="2.2" fill="#5a86d0" />
          <path d="M26 2L13 27" stroke="#e88a2c" strokeWidth="2.4" />
          <path d="M24 1l4 2-2 4-4-2z" fill="#c8a068" />
        </svg>
      </TaskBtn>
      <TaskBtn w={56} active>
        <svg width="30" height="30" viewBox="0 0 30 30">
          <path d="M2 17l3-4h20l3 4v10H2z" fill="#c0c5ca" stroke="#6d7278" />
          <rect x="2" y="19" width="26" height="8" fill="#8d9298" />
          <rect x="10" y="3" width="16" height="13" fill="#dfe6ee" stroke="#66707a" />
          <rect x="12" y="5" width="12" height="9" fill="#1c35c4" />
          <path d="M12 5h9l-9 7z" fill="#5f8be8" />
        </svg>
      </TaskBtn>
      <div className="flex-1" />
      <span className="text-[#e0e6ec] mr-[15px] -mt-[5px]">RU</span>
      <svg width="10" height="7" viewBox="0 0 10 7" className="mr-[11px]"><path d="M0 7L5 1l5 6z" fill="#eef2f6" /></svg>
      <svg width="16" height="16" viewBox="0 0 16 16" className="mr-[8px]"><path d="M1 1v14" stroke="#eef2f6" strokeWidth="1.6" /><path d="M2 2h9v8H2z" fill="#eef2f6" /><circle cx="11" cy="11.5" r="4.2" fill="#d23a2e" /><path d="M9 9.5l4 4M13 9.5l-4 4" stroke="#fff" strokeWidth="1.2" /></svg>
      <svg width="16" height="16" viewBox="0 0 16 16" className="mr-[6px]"><path d="M2 1v4M5 1v4M1 5h5v3H1zM3.5 8v7" stroke="#eef2f6" strokeWidth="1.2" fill="#eef2f6" /><rect x="6.5" y="4" width="9" height="8" fill="#43566a" stroke="#eef2f6" /><path d="M8 14h6" stroke="#eef2f6" strokeWidth="1.4" /></svg>
      <svg width="16" height="16" viewBox="0 0 16 16" className="mr-[14px]"><path d="M1 6h3l4-4v12l-4-4H1z" fill="#eef2f6" /><path d="M10 5c1.4 1.8 1.4 4.2 0 6M12.5 3.5c2.2 2.6 2.2 6.4 0 9" fill="none" stroke="#eef2f6" /></svg>
      <div className="w-[59px] mr-[10px] text-center text-[#eef2f6] leading-[17px] text-[11px] whitespace-nowrap">
        <div>15:02</div>
        <div>13.03.2017</div>
      </div>
    </div>
  );
}

export default function App() {
  return (
    <div className="relative w-[1216px] h-[969px] bg-black overflow-hidden" style={font}>
      <Desktop />
      <BackWindow />
      <MainWindow />
      <Taskbar />
    </div>
  );
}
